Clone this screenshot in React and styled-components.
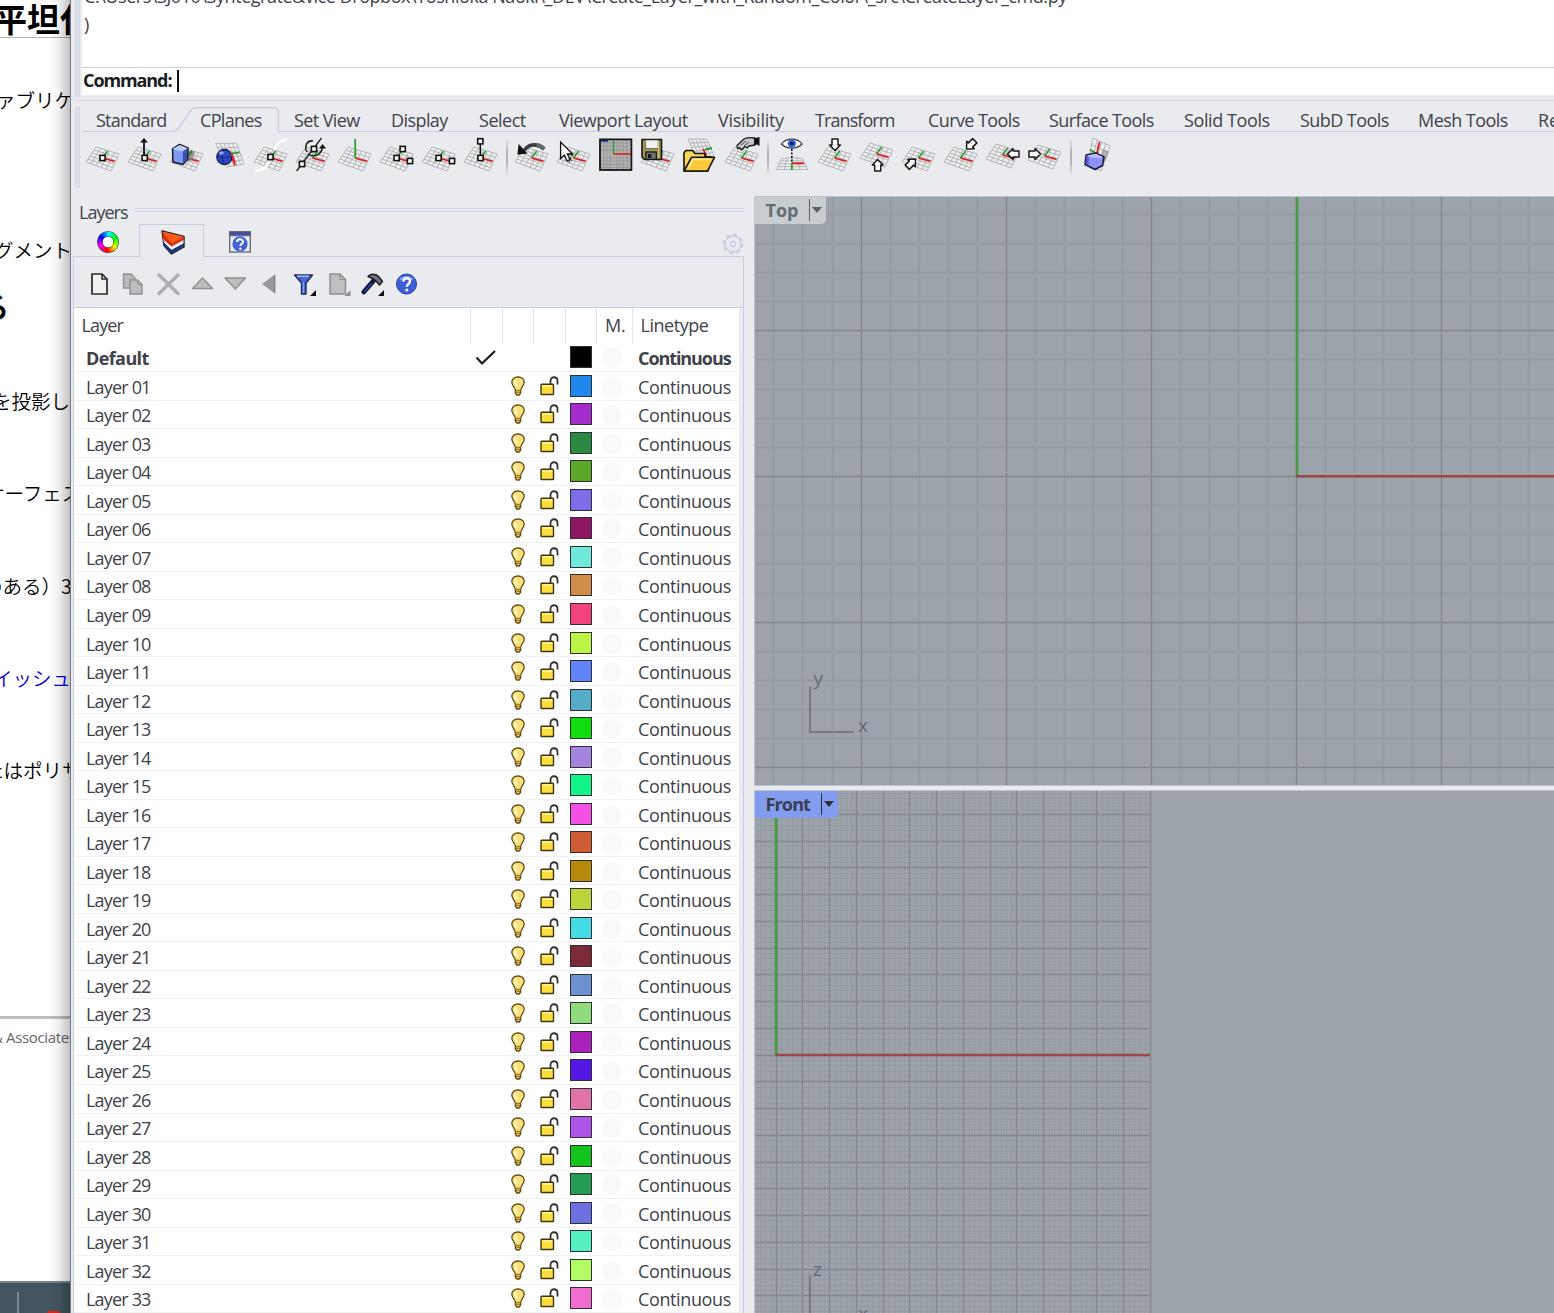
import React, { useLayoutEffect, useRef, useState } from "react";
import styled, { createGlobalStyle } from "styled-components";

const GlobalStyle = createGlobalStyle`
  html, body { margin: 0; padding: 0; overflow: hidden; background: #fff; }
  * { box-sizing: border-box; }
`;

const ui = `"Open Sans", "Noto Sans", sans-serif`;
const jp = `"Noto Sans CJK JP", "Noto Sans", sans-serif`;
const line = "#c6cfe0";
const face = "#eaebef";

/* ---------- text that is spaced out to a given width ---------- */

const LabelText = styled.span`
  font-family: ${ui};
  font-size: ${(p) => p.$size || 18}px;
  font-weight: ${(p) => (p.$bold ? 700 : 400)};
  color: ${(p) => p.$color || "#40424a"};
  line-height: 28px;
  white-space: pre;
  flex: none;
`;

function Label({ w, children, ...rest }) {
  const ref = useRef(null);
  const [spacing, setSpacing] = useState(0);
  useLayoutEffect(() => {
    if (!w) return;
    const natural = ref.current.getBoundingClientRect().width;
    setSpacing((w - natural) / (children.length - 0.5));
  }, [w, children]);
  return (
    <LabelText ref={ref} style={{ letterSpacing: spacing }} {...rest}>
      {children}
    </LabelText>
  );
}

/* ---------- frame ---------- */

const Screen = styled.div`
  display: flex;
  width: 1554px;
  height: 1313px;
  overflow: hidden;
`;

const Page = styled.aside`
  position: relative;
  width: 70px;
  flex: none;
  overflow: hidden;
  background: #fff;
  display: flex;
  flex-direction: column;
  &::after {
    content: "";
    position: absolute;
    inset: 0 0 0 auto;
    width: 22px;
    background: linear-gradient(to right, rgba(0, 0, 0, 0), rgba(0, 0, 0, 0.05) 45%, rgba(0, 0, 0, 0.24));
  }
`;

const PageTitle = styled.h1`
  margin: 0 0 0 -6px;
  height: 38px;
  font: 700 33px/36px ${jp};
  white-space: nowrap;
  color: #000;
  border-bottom: 1px solid #b4b4b4;
  flex: none;
`;

const PageLine = styled.p`
  margin: ${(p) => p.$gap}px 0 0 ${(p) => p.$shift}px;
  font: ${(p) => (p.$bold ? 700 : 350)} ${(p) => p.$size || 19.5}px/30px ${jp};
  white-space: nowrap;
  color: ${(p) => p.$color || "#000"};
  flex: none;
`;

const PageRule = styled.hr`
  margin: 231px 0 0;
  border: 0;
  height: 3px;
  background: #bcbcbc;
  flex: none;
`;

const PageNote = styled.p`
  margin: 3px 0 0 -8px;
  font: 400 15px/30px ${ui};
  letter-spacing: -0.35px;
  white-space: nowrap;
  color: #666;
  flex: none;
`;

const PageFooter = styled.footer`
  margin-top: auto;
  height: 32px;
  flex: none;
  background: #44555f;
  border-top: 2px solid #75848c;
  display: flex;
  align-items: flex-end;
  gap: 28px;
  padding-left: 17px;
  overflow: hidden;
`;

const FooterDivider = styled.i`
  width: 2px;
  height: 21px;
  background: #7f8b92;
`;

const FooterBadge = styled.i`
  width: 13px;
  height: 2px;
  border-radius: 3px 3px 0 0;
  background: #e2231a;
`;

const Window = styled.main`
  flex: 1;
  min-width: 0;
  display: flex;
  flex-direction: column;
  background: ${face};
  border-left: 1px solid #77777e;
  padding-left: 1px;
`;

const Grip = styled.i`
  width: 5px;
  flex: none;
  margin: 0 2px 0 3px;
  height: ${(p) => p.$h}px;
  border-left: 2px solid #d3dae8;
  border-right: 2px solid #d3dae8;
`;

/* ---------- command area ---------- */

const CommandArea = styled.section`
  display: flex;
  height: 101px;
  flex: none;
  border-bottom: 1px solid #d5dbe8;
`;

const CommandBox = styled.div`
  flex: 1;
  min-width: 0;
  height: 95px;
  background: #fff;
  overflow: hidden;
`;

const History = styled.div`
  height: 68px;
  padding-left: 2px;
  border-bottom: 1px solid ${line};
  overflow: hidden;
  display: flex;
  flex-direction: column;
  align-items: flex-start;
  & > :first-child { margin-top: -18px; }
`;

const Prompt = styled.div`
  display: flex;
  align-items: center;
  height: 23px;
  padding-left: 1px;
`;

const Caret = styled.i`
  width: 1.5px;
  height: 22px;
  margin: 2px 0 0 6px;
  background: #111;
`;

/* ---------- tool tabs ---------- */

const ToolArea = styled.section`
  display: flex;
  height: 95px;
  flex: none;
  padding-top: 6px;
`;

const ToolBody = styled.div`
  flex: 1;
  min-width: 0;
  overflow: hidden;
`;

const TabRow = styled.nav`
  display: flex;
  height: 25px;
`;

const ToolTab = styled.div`
  position: relative;
  flex: none;
  width: ${(p) => p.$w}px;
  height: 25px;
  padding-left: ${(p) => p.$pad}px;
  padding-top: ${(p) => (p.$active ? 1 : 2)}px;
  display: flex;
  align-items: center;
  border-bottom: ${(p) => (p.$active ? "0" : `1.5px solid ${line}`)};
`;

const TabOutline = styled.svg`
  position: absolute;
  left: 0;
  top: 0;
`;

const IconRow = styled.div`
  display: flex;
  padding: 6px 0 0 4px;
`;

const ToolSvg = styled.svg`
  flex: none;
  width: 33px;
  height: 34px;
  margin-right: 9px;
  overflow: visible;
`;

const ToolDivider = styled.i`
  width: 1.5px;
  height: 38px;
  margin-right: 7.5px;
  background: linear-gradient(to bottom, transparent, #b4b5b9 35%, #b4b5b9 65%, transparent);
`;

/* ---------- layers panel ---------- */

const Workspace = styled.section`
  display: flex;
  flex: 1;
  min-height: 0;
`;

const LayersPane = styled.section`
  width: 682px;
  flex: none;
  display: flex;
  flex-direction: column;
  padding-left: 1px;
`;

const PaneTitle = styled.header`
  height: 28px;
  padding: 3px 10px 0 6px;
  display: flex;
  align-items: center;
  gap: 6px;
`;

const TitleLines = styled.i`
  flex: 1;
  height: 4px;
  margin-top: -3px;
  border-top: 1px solid #cdd6e4;
  border-bottom: 1px solid #cdd6e4;
`;

const PaneTabs = styled.nav`
  display: flex;
  height: 33px;
  width: 671px;
`;

const PaneTab = styled.div`
  width: ${(p) => p.$w}px;
  flex: none;
  display: flex;
  align-items: center;
  padding: ${(p) => (p.$active ? "3px 0 0 3px" : "3px 0 0 3px")};
  justify-content: center;
  border: solid ${line};
  border-width: ${(p) => (p.$active ? "1.5px 1.5px 0 1.5px" : "0 0 1.5px")};
`;

const PaneTabRest = styled.div`
  flex: 1;
  display: flex;
  align-items: center;
  justify-content: flex-end;
  padding-top: 7px;
  border-bottom: 1.5px solid ${line};
`;

const PaneFrame = styled.div`
  width: 671px;
  flex: 1;
  min-height: 0;
  display: flex;
  flex-direction: column;
  border: solid ${line};
  border-width: 0 1.5px 0 1px;
`;

const PaneTools = styled.div`
  height: 51px;
  flex: none;
  display: flex;
  align-items: center;
  padding: 4px 0 0 15.5px;
  border-bottom: 1.5px solid ${line};
`;

const SmallSvg = styled.svg`
  flex: none;
  width: ${(p) => p.$w}px;
  height: 24px;
  overflow: visible;
`;

const Table = styled.div`
  width: 665px;
  flex: 1;
  min-height: 0;
  overflow: hidden;
  background: #fff;
  display: flex;
  flex-direction: column;
`;

const HeadRow = styled.div`
  display: flex;
  flex: none;
  height: 35.6px;
`;

const HeadCell = styled.div`
  width: ${(p) => p.$w}px;
  flex: none;
  padding: 0 0 1px ${(p) => p.$pad}px;
  display: flex;
  align-items: center;
  border-right: ${(p) => (p.$last ? "0" : "1.5px solid #dfe3ec")};
`;

const Row = styled.div`
  display: flex;
  flex: none;
  align-items: center;
  height: 28.53px;
  border-bottom: 1.5px solid #f0f1f6;
`;

const NameCell = styled.div`
  width: 396.3px;
  padding: 2px 0 0 12px;
  flex: none;
  display: flex;
`;

const IconCell = styled.div`
  width: 31.6px;
  flex: none;
  display: flex;
  justify-content: center;
  align-items: center;
`;

const Swatch = styled.i`
  width: 22px;
  height: 22px;
  background: ${(p) => p.$c};
  border: 1.5px solid #2e2f33;
`;

const MaterialCell = styled.div`
  width: 35px;
  flex: none;
  display: flex;
  padding: 2px 0 0 5px;
`;

const MaterialDot = styled.i`
  width: 20px;
  height: 20px;
  border-radius: 50%;
  background: #f9f9fa;
`;

const TypeCell = styled.div`
  padding: 2px 0 0 6.4px;
  display: flex;
`;

/* ---------- viewports ---------- */

const Viewports = styled.section`
  flex: 1;
  min-width: 0;
  display: flex;
  flex-direction: column;
  gap: 4px;
`;

const Viewport = styled.div`
  position: relative;
  height: ${(p) => p.$h}px;
  flex: none;
  overflow: hidden;
  background: #9ca3ab;
  border: solid #b9c3d3;
  border-width: 1px 0 1px 1px;
`;

const Scene = styled.svg`
  display: block;
`;

const ViewTitle = styled.div`
  position: absolute;
  left: 0;
  top: 0;
  width: ${(p) => p.$w}px;
  height: 27px;
  padding: 0 0 1px 10.5px;
  display: flex;
  align-items: center;
  background: ${(p) => (p.$active ? "#829df0" : "#c8cdd2")};
  border-bottom-right-radius: 5px;
`;

const ViewMenu = styled.i`
  width: 15px;
  height: 22px;
  margin-left: auto;
  margin-right: 2px;
  border-left: 1.5px solid ${(p) => p.$c};
  display: flex;
  align-items: center;
  justify-content: center;
  &::after {
    content: "";
    border: solid transparent;
    border-width: 6px 5.5px 0;
    border-top-color: ${(p) => p.$c};
  }
`;

/* ---------- tool icons ---------- */

const mix = (a, b, t) => [a[0] + (b[0] - a[0]) * t, a[1] + (b[1] - a[1]) * t];

function Mesh({ at = [[10, 9], [33, 16], [25, 33], [0, 24]], n = 5, fill = "#eeeef0" }) {
  const [a, b, c, d] = at;
  const seg = [];
  for (let i = 0; i <= n; i++) {
    const t = i / n;
    seg.push([mix(a, b, t), mix(d, c, t)], [mix(a, d, t), mix(b, c, t)]);
  }
  return (
    <g>
      <polygon points={at.join(" ")} fill={fill} />
      <path d={seg.map(([p, q]) => `M${p}L${q}`).join("")} stroke="#b3b4b7" strokeWidth="1" fill="none" />
    </g>
  );
}

const Axes = ({ x = 16.5, y = 20 }) => (
  <g strokeWidth="1.7" fill="none">
    <path d={`M${x} ${y}l5.2 -7`} stroke="#2f9a2f" />
    <path d={`M${x} ${y}l12 3.4`} stroke="#dc2020" />
  </g>
);

const Base = ({ dy = 0 }) => (
  <g transform={`translate(0 ${dy})`}>
    <Mesh />
    <Axes />
  </g>
);

const Knot = ({ x, y }) => (
  <rect x={x - 2.6} y={y - 2.6} width="5.2" height="5.2" fill="#fff" stroke="#111" strokeWidth="1.6" />
);

const Arrow = ({ x, y, r }) => (
  <path
    transform={`translate(${x} ${y}) rotate(${r})`}
    d="M-3 -6H3V0H5.4L0 5.6L-5.4 0H-3Z"
    fill="#fff"
    stroke="#1a1a1a"
    strokeWidth="1.5"
    strokeLinejoin="round"
  />
);

const toolIcons = [
  <><Base /><Knot x={16.5} y={20} /></>,
  <><Base /><path d="M16 3V18" stroke="#111" strokeWidth="1.8" /><path d="M16 0L20 4.6H12Z" fill="#111" /><Knot x={16.7} y={20} /></>,
  <>
    <Base />
    <path d="M17 12L25 14L23 22L17 24Z" fill="#77787c" opacity=".65" />
    <path d="M18 18l4 -5" stroke="#2f7a2f" strokeWidth="2" />
    <path d="M2.5 11L9.5 6.5L18 10L17.5 21L13 26.5L3 24Z" fill="#7d9cf8" stroke="#15171f" strokeWidth="1.5" strokeLinejoin="round" />
    <path d="M2.5 11L9.5 7L17.5 10L12.5 13.5Z" fill="#b9caff" />
    <path d="M12.7 13.5L17.5 10.5L17 21L13 26Z" fill="#3a4fb8" />
  </>,
  <>
    <Mesh at={[[3.7, 5.3], [24.7, 5.3], [32, 26], [15, 29]]} />
    <path d="M20 15.4L27.5 14.6" stroke="#2f9a2f" strokeWidth="1.8" />
    <path d="M18.5 16L23.2 27.5" stroke="#dc2020" strokeWidth="1.8" />
    <circle cx="12.4" cy="19" r="7.6" fill="#2c48c4" stroke="#10183c" strokeWidth="1.2" />
    <path d="M5 18C9 20 16 20 20 18M11.5 11.5C10 16 10 22 12.5 26.5" stroke="#0d1a55" strokeWidth=".7" fill="none" />
    <ellipse cx="9.5" cy="15" rx="2.4" ry="1.8" fill="#8ea6ff" />
    <path d="M19.5 15.500L22.800 25" stroke="#dc2020" strokeWidth="2" />
  </>,
  <>
    <Base />
    <path d="M33 1.8C25 2 22 7 20 12M1.5 32.6C8 33 12 30 14.5 24" stroke="#fff" strokeWidth="2.4" fill="none" />
    <Knot x={16.5} y={19} />
  </>,
  <>
    <Base />
    <path d="M.6 33L25.5 0" stroke="#222" strokeWidth="1.3" />
    <path d="M17 3C11 2 8 8 11 14M12 16C18 20 25 17 26.3 10" stroke="#222" strokeWidth="1.5" fill="none" />
    <path d="M26.6 6L30 10.5H23Z" fill="#111" />
    <Knot x={18} y={11} /><Knot x={6} y={26} />
  </>,
  <><Mesh /><path d="M17 20l12 3.4" stroke="#dc2020" strokeWidth="1.7" /><path d="M17.2 1V20" stroke="#2fa02f" strokeWidth="1.8" /></>,
  <><Base /><Knot x={16.6} y={20} /><Knot x={22.7} y={11} /><Knot x={30} y={23} /></>,
  <><Base /><Knot x={16.6} y={20} /><Knot x={30} y={23} /></>,
  <><Base /><path d="M16.3 4V18" stroke="#111" strokeWidth="1.5" /><Knot x={16.3} y={3.3} /><Knot x={16.5} y={20} /></>,
  null,
  <>
    <Base />
    <path d="M8 12C11 5 21 2 30.5 9.5L28 12.5C21 7 15 8 11 13" fill="#3a3b3e" />
    <path d="M3.6 6L2.4 16.8L12.5 15.4Z" fill="#111" />
    <path d="M22 5.2C25.5 5.2 28 7 30.5 9.5L28 12.5C26 10.6 24 9.6 21.5 9Z" fill="#66676a" />
  </>,
  <>
    <Base />
    <path d="M3.6 4V20.5L7.4 17L10 23L13 21.7L10.4 16H15.6Z" fill="#fff" stroke="#111" strokeWidth="1.3" />
    <path d="M12 16h3v3M9 22l4 2M13 19l2 4" stroke="#222" strokeWidth="1.2" strokeDasharray="2 1.2" fill="none" />
  </>,
  <>
    <rect x="1" y="1.4" width="31.4" height="30.6" fill="#b3b3b3" stroke="#151515" strokeWidth="1.8" />
    <path d="M5 2V31M8 2V31M11 2V31M18 2V31M21 2V31M24.5 2V31M28 2V31M2 5H32M2 8.500H32M2 12H32M2 19.500H32M2 23H32M2 26.500H32M2 29.500H32" stroke="#8f9092" strokeWidth=".7" />
    <path d="M14.500 16V3" stroke="#2f9a2f" strokeWidth="1.6" /><path d="M14.500 16H32" stroke="#dc2020" strokeWidth="1.6" />
    <path d="M2 2.800H9" stroke="#17258a" strokeWidth="1.8" />
  </>,
  <>
    <Base />
    <path d="M1 1.500H20.500V21.500H3.500L1 19Z" fill="#a0964c" stroke="#17170f" strokeWidth="1.6" />
    <rect x="4.600" y="2" width="12.500" height="8.500" fill="#f1f1f1" stroke="#4a4728" strokeWidth=".6" />
    <path d="M17.500 3v17" stroke="#c9c07a" strokeWidth="1" />
    <rect x="4.800" y="14" width="10.500" height="7.300" fill="#6f7274" stroke="#17170f" strokeWidth="1.2" />
    <rect x="7" y="16" width="3.200" height="4" fill="#17170f" />
  </>,
  <>
    <Mesh at={[[5, 1], [24, 1], [31, 18], [14, 22]]} />
    <path d="M22 11.500L29 10" stroke="#2f9a2f" strokeWidth="1.8" /><path d="M20 11L23.500 18" stroke="#dc2020" strokeWidth="1.8" />
    <path d="M1 33V14.500L3 12.500H9.500L12 15.500H22V19H28L25 33Z" fill="#f6d75a" stroke="#14120a" strokeWidth="1.6" strokeLinejoin="round" />
    <path d="M1 33L8.500 19.300H31.500L24.500 33Z" fill="#fbc83a" stroke="#14120a" strokeWidth="1.6" strokeLinejoin="round" />
    <path d="M5 31L10 21.500H28" stroke="#ffeb9c" strokeWidth="1.6" fill="none" />
  </>,
  <>
    <Base />
    <path d="M12 7.500L19 1C22 -.5 26 -.5 30 0V7L24 8L22 10L20 8.500L16.500 12L15 10L12.500 10.500Z" fill="#c4c5c8" stroke="#1d1d1f" strokeWidth="1.3" strokeLinejoin="round" />
    <path d="M29 .5L34.500 -1V8L32 6.500L29 7Z" fill="#111" />
    <path d="M16 7l5 -4M19 8l5 -4" stroke="#333" strokeWidth=".8" />
  </>,
  null,
  <>
    <Mesh at={[[6, 20], [26, 20], [32, 31.500], [.5, 31.500]]} n={4} />
    <path d="M16 25.300H28" stroke="#dc2020" strokeWidth="2" /><path d="M15.800 25V32" stroke="#2f9a2f" strokeWidth="1.800" />
    <path d="M15.800 11V25" stroke="#111" strokeWidth="1.600" strokeDasharray="2 1.500" />
    <path d="M5.500 6C10 -.5 21.500 -.5 26 6C21 11.500 11 11.500 5.500 6Z" fill="#fff" stroke="#3b3b3f" strokeWidth="1.300" />
    <circle cx="15.800" cy="5.500" r="4.200" fill="#3b62dc" /><circle cx="15.800" cy="5.500" r="1.800" fill="#0e1330" />
  </>,
  <><Base /><Arrow x={17} y={7} r={0} /></>,
  <><Base dy={-4} /><Arrow x={17.700} y={27} r={180} /></>,
  <><Base /><Arrow x={9.500} y={25} r={-135} /></>,
  <><Base /><Arrow x={26.500} y={7} r={45} /></>,
  <><Base dy={-3} /><Arrow x={27} y={16} r={90} /></>,
  <><Base dy={-2} /><Arrow x={7} y={16} r={-90} /></>,
  null,
  <>
    <Mesh at={[[14, 0], [31, 8], [22, 33], [8, 27]]} n={4} />
    <path d="M24 11L30 14L26 24L21 22Z" fill="#77787c" opacity=".5" />
    <path d="M20.500 4L18 15" stroke="#dc2020" strokeWidth="1.800" /><path d="M11 11.500L18 16" stroke="#2f9a2f" strokeWidth="1.800" />
    <path d="M7 17L17 15L25 19L23.500 27.500L16 31.500L6 26.500Z" fill="#8f90fa" stroke="#17182a" strokeWidth="1.500" strokeLinejoin="round" />
    <path d="M7 17.500L10 18L9.500 28L6.500 26Z" fill="#5357c8" />
    <path d="M8 17.500L17 15.700L24 19L20 20.500L10 19Z" fill="#b9bcff" />
  </>,
];

/* ---------- tabs data ---------- */

const toolTabs = [
  ["Standard", 92, 14, 71],
  ["CPlanes", 105, 26, 62],
  ["Set View", 97, 15, 66],
  ["Display", 88, 15, 57],
  ["Select", 80, 15, 47],
  ["Viewport Layout", 159, 15, 129],
  ["Visibility", 97, 15, 66],
  ["Transform", 113, 15, 80],
  ["Curve Tools", 121, 15, 92],
  ["Surface Tools", 135, 15, 105],
  ["Solid Tools", 116, 15, 86],
  ["SubD Tools", 118, 15, 89],
  ["Mesh Tools", 120, 15, 90],
  ["Render Tools", 140, 15, 108],
];

/* ---------- panel icons ---------- */

const WheelIcon = () => {
  const hues = Array.from({ length: 24 }, (_, i) => i);
  const pt = (deg) => [12 + 8 * Math.cos((deg * Math.PI) / 180), 12 + 8 * Math.sin((deg * Math.PI) / 180)];
  return (
    <svg width="24" height="24">
      <circle cx="12" cy="12" r="8" fill="none" stroke="#333" strokeWidth="5.600" />
      {hues.map((i) => (
        <path
          key={i}
          d={`M${pt(i * 15 - 1)}A8 8 0 0 1 ${pt(i * 15 + 16)}`}
          stroke={`hsl(${(450 - i * 15) % 360} 100% 50%)`}
          strokeWidth="4.600"
          fill="none"
        />
      ))}
      <circle cx="12" cy="12" r="5.200" fill="#fff" />
    </svg>
  );
};

const LayersIcon = () => (
  <svg width="24" height="25" viewBox="0 0 24 25">
    <path d="M1 1L23 6.500V17L10.500 24L3 15.500Z" fill="#14224f" stroke="#191c2a" strokeWidth="1.400" strokeLinejoin="round" />
    <path d="M3 13.500L10.500 21.500L22.500 15V16.800L10.500 23.200L3.500 15.500Z" fill="#1c43b0" />
    <path d="M2 8.500L10.500 16L22.500 9.500V13.500L10.500 20L3 12.500Z" fill="#eff2fa" />
    <path d="M1.300 1.500L22.700 6.800V10L10.500 16.500L2.200 9.500Z" fill="#d93410" />
    <path d="M1.300 1.500L22.700 6.800L10.500 13.200Z" fill="#ff5a1c" />
  </svg>
);

const HelpPanelIcon = () => (
  <svg width="22" height="22" viewBox="0 0 22 22">
    <rect x=".7" y=".7" width="20.600" height="20.300" fill="#e9edf8" stroke="#6c6d74" strokeWidth="1.400" />
    <rect x="1" y="1" width="20" height="3.600" fill="#4a4aa0" />
    <path d="M1.400 4.800H20.600" stroke="#55565e" strokeWidth=".8" />
    <circle cx="11" cy="12.900" r="7.600" fill="#4262d8" />
    <path d="M8 11C8 7.500 14 7.500 14 10.800C14 12.800 11.300 12.800 11.300 15" stroke="#fff" strokeWidth="2" fill="none" />
    <circle cx="11.300" cy="17.800" r="1.200" fill="#fff" />
  </svg>
);

const GearIcon = () => (
  <svg width="22" height="22" viewBox="-11 -11 22 22" fill="none" stroke="#c5cde4">
    <circle r="8" strokeWidth="1.300" />
    <circle r="9.500" strokeWidth="2" strokeDasharray="3.730 3.730" />
    <circle r="2.500" strokeWidth="1.300" />
  </svg>
);

const panelTools = [
  [34, <path d="M2 2H12L17 7V22H2Z" fill="#f0f0f1" stroke="#2a2a2c" strokeWidth="1.700" />, <path d="M12 2V7H17" fill="none" stroke="#2a2a2c" strokeWidth="1.500" />],
  [34, <path d="M-.5 2H7L11 6V16H-.5Z" fill="#b9b9bb" stroke="#8f9092" strokeWidth="1.400" />, <path d="M6 8H13.500L18 12.500V22H6Z" fill="#bdbdbf" stroke="#8f9092" strokeWidth="1.400" />, <path d="M13.500 8V12.500H18" fill="none" stroke="#8f9092" />],
  [34, <path d="M1 3L20 21.500M20 3L1 21.500" stroke="#adaeb1" strokeWidth="3.400" strokeLinecap="round" />],
  [34, <path d="M.5 16.500L10.500 6L20.500 16.500Z" fill="#bdbdbf" stroke="#8f9092" strokeWidth="1.400" strokeLinejoin="round" />],
  [34, <path d="M-1 6H19.500L9.300 17Z" fill="#bdbdbf" stroke="#8f9092" strokeWidth="1.400" strokeLinejoin="round" />],
  [34, <path d="M15.500 2V22L2 12Z" fill="#97989a" />, <path d="M14.500 3V21" stroke="#808184" />],
  [34,
    <path d="M.5 3H18.500L12 11V22H7.500V11Z" fill="#4566cf" stroke="#1b2a66" strokeWidth="1.400" strokeLinejoin="round" />,
    <path d="M3 4.200H15" stroke="#a9bdf8" strokeWidth="1.500" />,
    <path d="M9.300 10V21" stroke="#7f9bf0" strokeWidth="1.400" />,
    <path d="M22 18V24H16Z" fill="#111" />],
  [34,
    <path d="M2 2H12L17.500 7.500V22H2Z" fill="#bfbfc1" stroke="#8f9092" strokeWidth="1.500" />,
    <path d="M12 2V7.500H17.500" fill="none" stroke="#8f9092" />,
    <path d="M22.500 18V24H16.500Z" fill="#8f9092" />],
  [34,
    <path d="M13 7L1.800 20" stroke="#0e1433" strokeWidth="4.800" strokeLinecap="round" />,
    <path d="M9.500 11.500L2.500 19.500" stroke="#2544a8" strokeWidth="1.800" strokeLinecap="round" />,
    <path d="M6 4.500C9 1.500 14 1.500 17 5L20.500 9.500L17.500 13L13.500 8.500C11 6.500 9 6 6 4.500Z" fill="#6f7174" stroke="#17181b" strokeWidth="1.400" strokeLinejoin="round" />,
    <path d="M22 18V24H16Z" fill="#111" />],
  [22,
    <circle cx="10.500" cy="12" r="10" fill="#3c5fd8" stroke="#2341a4" />,
    <path d="M4 8A8 7 0 0 1 17 8" fill="none" stroke="#8ea6f2" strokeWidth="1.500" />,
    <path d="M7.300 9.500C7.300 5.200 14 5.200 14 9.300C14 11.800 10.800 12 10.800 14.800" stroke="#fff" strokeWidth="2.400" fill="none" />,
    <circle cx="10.800" cy="18" r="1.500" fill="#fff" />],
];

const CheckIcon = () => (
  <svg width="22" height="18" viewBox="0 0 22 18">
    <path d="M1.500 9.500L7 15.500L20 3" fill="none" stroke="#1c1c1e" strokeWidth="2.200" />
  </svg>
);

const BulbIcon = () => (
  <svg width="14" height="20" viewBox="0 0 14 20">
    <path d="M7 1C3.200 1 .8 3.400 .8 6.300C.8 9.500 3.800 11 4.300 14V17L5.800 19H8.200L9.700 17V14C10.200 11 13.200 9.500 13.200 6.300C13.200 3.400 10.800 1 7 1Z" fill="#fbdf78" stroke="#5e4a14" strokeWidth="1.300" />
    <path d="M5 4.500C3.800 6 4.500 9 6.300 10.500" stroke="#fffbe0" strokeWidth="2" fill="none" />
    <path d="M4.500 14.500H9.500M5 16.500H9" stroke="#a87c20" strokeWidth="1.300" />
  </svg>
);

const LockIcon = () => (
  <svg width="19" height="20" viewBox="0 0 19 20">
    <path d="M10.500 8V5C10.500 0 17.500 0 17.500 5V8.500" fill="none" stroke="#333336" strokeWidth="1.800" />
    <rect x="1" y="8.300" width="12.500" height="10.200" rx=".8" fill="#fadf3c" stroke="#3e3510" strokeWidth="1.400" />
    <path d="M2.500 10H12" stroke="#fff6a8" strokeWidth="1.400" />
  </svg>
);

const colors = [
  "#1e88ec", "#a42ccc", "#2a8a42", "#5ca82a", "#7c6ee8", "#8e1660", "#6ee8d8", "#d08c4a", "#f4427c", "#bcf444", "#6084fc",
  "#54aec8", "#10dc10", "#a484dc", "#10f488", "#f450e4", "#d05c34", "#b88a0c", "#bcd43c", "#44dce4", "#7c2a38", "#6c90d0",
  "#90dc7c", "#ac20bc", "#5418e4", "#e074a8", "#ac54e8", "#14c41c", "#249c54", "#6c70e0", "#54f0c4", "#b4fc64", "#f06cd0",
];

function LayerRow({ name, color, current }) {
  return (
    <Row>
      <NameCell><Label $bold={current} w={current ? 63 : 65}>{name}</Label></NameCell>
      <IconCell>{current && <CheckIcon />}</IconCell>
      <IconCell>{!current && <BulbIcon />}</IconCell>
      <IconCell>{!current && <LockIcon />}</IconCell>
      <IconCell><Swatch $c={color} /></IconCell>
      <MaterialCell><MaterialDot /></MaterialCell>
      <TypeCell><Label $bold={current} w={93}>Continuous</Label></TypeCell>
    </Row>
  );
}

/* ---------- viewport drawings ---------- */

function gridPath(ox, oy, sx, sy, x1, y1, every, major) {
  let d = "";
  const keep = (i) => (i % every === 0) === major;
  for (let i = Math.ceil(-ox / sx); ox + i * sx <= x1 + 0.5; i++)
    if (keep(i)) d += `M${Math.round(ox + i * sx) + 0.5} 0V${y1}`;
  for (let i = Math.ceil(-oy / sy); oy + i * sy <= y1 + 0.5; i++)
    if (keep(i)) d += `M0 ${Math.round(oy + i * sy) + 0.5}H${x1}`;
  return d;
}

const SceneText = styled.text`
  font: 400 19px ${ui};
  fill: #666a6e;
`;

const TopScene = () => (
  <Scene width="799" height="589">
    <path d={gridPath(541, 279, 29.03, 29.13, 799, 589, 5, false)} stroke="#9299a1" strokeWidth="1.300" />
    <path d={gridPath(541, 279, 29.03, 29.13, 799, 589, 5, true)} stroke="#81868f" strokeWidth="1.300" />
    <path d="M542 0V279" stroke="#479a48" strokeWidth="2.600" />
    <path d="M541 279.300H799" stroke="#9c4648" strokeWidth="2.600" />
    <path d="M55 489.500V535H99" fill="none" stroke="#6b6f73" strokeWidth="1.500" />
    <SceneText x="58.500" y="488">y</SceneText>
    <SceneText x="103" y="535">x</SceneText>
  </Scene>
);

const FrontScene = () => (
  <Scene width="799" height="522">
    <path d={gridPath(21, 263.6, 5.348, 5.348, 395, 522, 5, false)} stroke="#939aa2" strokeWidth="1" />
    <path d={gridPath(20.6, 263.6, 26.74, 26.74, 395.5, 522, 1, true)} stroke="#81868f" strokeWidth="1.300" />
    <path d="M21.200 0V264" stroke="#479a48" strokeWidth="3" />
    <path d="M20.500 264H395" stroke="#9c4648" strokeWidth="2.600" />
    <path d="M55 484V522" fill="none" stroke="#6b6f73" strokeWidth="1.500" />
    <SceneText x="58" y="485">z</SceneText>
    <SceneText x="103" y="529">x</SceneText>
  </Scene>
);

export default function App() {
  return (
    <>
      <GlobalStyle />
      <Screen>
        <Page>
          <PageTitle>平坦化</PageTitle>
          <PageLine $gap={47} $shift={-4}>ァブリケ</PageLine>
          <PageLine $gap={120} $shift={-6}>グメント</PageLine>
          <PageLine $gap={26} $shift={-20} $bold $size={29}>る</PageLine>
          <PageLine $gap={65} $shift={-8}>を投影し</PageLine>
          <PageLine $gap={62} $shift={-15}>サーフェス</PageLine>
          <PageLine $gap={63} $shift={-17}>のある）3</PageLine>
          <PageLine $gap={62} $shift={-7} $color="#0000ee">イッシュ</PageLine>
          <PageLine $gap={62} $shift={-16}>たはポリサ</PageLine>
          <PageRule />
          <PageNote>&amp; Associates</PageNote>
          <PageFooter><FooterDivider /><FooterBadge /></PageFooter>
        </Page>
        <Window>
          <CommandArea>
            <Grip $h={97} />
            <CommandBox>
              <History>
                <Label w={983}>{"C:\\Users\\SJ010\\Syntegrate&vice Dropbox\\Yoshioka Naoki\\_DEV\\Create_Layer_with_Random_Color\\_src\\CreateLayer_cmd.py"}</Label>
                <Label>)</Label>
              </History>
              <Prompt>
                <Label $bold $color="#1c1d22" w={89}>Command:</Label>
                <Caret />
              </Prompt>
            </CommandBox>
          </CommandArea>
          <ToolArea>
            <Grip $h={81} />
            <ToolBody>
              <TabRow>
                {toolTabs.map(([name, w, pad, tw]) => (
                  <ToolTab key={name} $w={w} $pad={pad} $active={name === "CPlanes"}>
                    {name === "CPlanes" && (
                      <TabOutline width="105" height="25">
                        <path d="M0 24.300C2 24.300 3 23 5 20.500L17 3.500C18.500 1.500 19.500 .8 22 .8H100C103 .8 104.300 2.500 104.300 5V25" fill="none" stroke={line} strokeWidth="1.400" />
                      </TabOutline>
                    )}
                    <Label w={tw}>{name}</Label>
                  </ToolTab>
                ))}
              </TabRow>
              <IconRow>
                {toolIcons.map((icon, i) =>
                  icon ? <ToolSvg key={i} viewBox="0 0 33 34">{icon}</ToolSvg> : <ToolDivider key={i} />
                )}
              </IconRow>
            </ToolBody>
          </ToolArea>
          <Workspace>
            <LayersPane>
              <PaneTitle><Label w={49}>Layers</Label><TitleLines /></PaneTitle>
              <PaneTabs>
                <PaneTab $w={66}><WheelIcon /></PaneTab>
                <PaneTab $w={65} $active><LayersIcon /></PaneTab>
                <PaneTab $w={68}><HelpPanelIcon /></PaneTab>
                <PaneTabRest><GearIcon /></PaneTabRest>
              </PaneTabs>
              <PaneFrame>
                <PaneTools>
                  {panelTools.map(([w, ...shapes], i) => (
                    <SmallSvg key={i} $w={w}>
                      {shapes.map((s, k) => <g key={k}>{s}</g>)}
                    </SmallSvg>
                  ))}
                </PaneTools>
                <Table>
                  <HeadRow>
                    <HeadCell $w={397} $pad={7.5}><Label w={42}>Layer</Label></HeadCell>
                    <HeadCell $w={31.6} $pad={0} />
                    <HeadCell $w={31.6} $pad={0} />
                    <HeadCell $w={31.6} $pad={0} />
                    <HeadCell $w={31.6} $pad={0} />
                    <HeadCell $w={36} $pad={7.5}><Label w={21}>M.</Label></HeadCell>
                    <HeadCell $w={100} $pad={7.2} $last><Label w={68}>Linetype</Label></HeadCell>
                  </HeadRow>
                  <LayerRow name="Default" color="#000" current />
                  {colors.map((c, i) => (
                    <LayerRow key={c} name={`Layer ${String(i + 1).padStart(2, "0")}`} color={c} />
                  ))}
                </Table>
              </PaneFrame>
            </LayersPane>
            <Viewports>
              <Viewport $h={590}>
                <TopScene />
                <ViewTitle $w={71}>
                  <Label $bold $color="#666c72" w={33}>Top</Label>
                  <ViewMenu $c="#5c6167" />
                </ViewTitle>
              </Viewport>
              <Viewport $h={524}>
                <FrontScene />
                <ViewTitle $w={83} $active>
                  <Label $bold $color="#3a3f50" w={45}>Front</Label>
                  <ViewMenu $c="#2c3038" />
                </ViewTitle>
              </Viewport>
            </Viewports>
          </Workspace>
        </Window>
      </Screen>
    </>
  );
}
